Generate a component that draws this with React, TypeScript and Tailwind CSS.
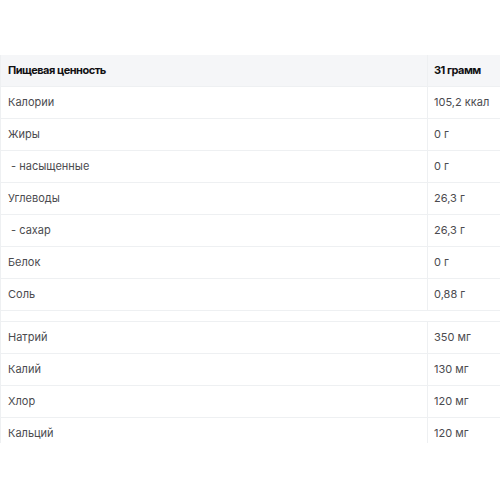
const rows1: [string, string][] = [
  ["Калории", "105,2 ккал"],
  ["Жиры", "0 г"],
  ["\u00a0- насыщенные", "0 г"],
  ["Углеводы", "26,3 г"],
  ["\u00a0- сахар", "26,3 г"],
  ["Белок", "0 г"],
  ["Соль", "0,88 г"],
];

const rows2: [string, string][] = [
  ["Натрий", "350 мг"],
  ["Калий", "130 мг"],
  ["Хлор", "120 мг"],
  ["Кальций", "120 мг"],
];

function Row({ label, value }: { label: string; value: string }) {
  return (
    <div className="flex h-8 border-b border-[#eef0f2] text-[11px] text-[#4b4b4f]">
      <div className="flex w-[427px] shrink-0 items-center border-r border-[#eef0f2] pl-[7px]">{label}</div>
      <div className="flex items-center pl-1.5">{value}</div>
    </div>
  );
}

export default function App() {
  return (
    <div className="h-[500px] w-[500px] overflow-hidden bg-white pt-[55px] font-['Inter',sans-serif]">
      <div className="h-[388px] w-[540px] overflow-hidden border-l border-[#eef0f2]">
        <div className="flex h-8 border-b border-[#eef0f2] bg-[#f5f6f8] text-[11px] font-bold tracking-[-0.5px] text-[#111113]">
          <div className="flex w-[427px] shrink-0 items-center border-r border-[#eef0f2] pl-[7px]">Пищевая ценность</div>
          <div className="flex items-center pl-1.5">31 грамм</div>
        </div>
        {rows1.map(([l, v]) => (
          <Row key={l} label={l} value={v} />
        ))}
        <div className="h-[11px] border-b border-[#eef0f2]" />
        {rows2.map(([l, v]) => (
          <Row key={l} label={l} value={v} />
        ))}
      </div>
    </div>
  );
}
